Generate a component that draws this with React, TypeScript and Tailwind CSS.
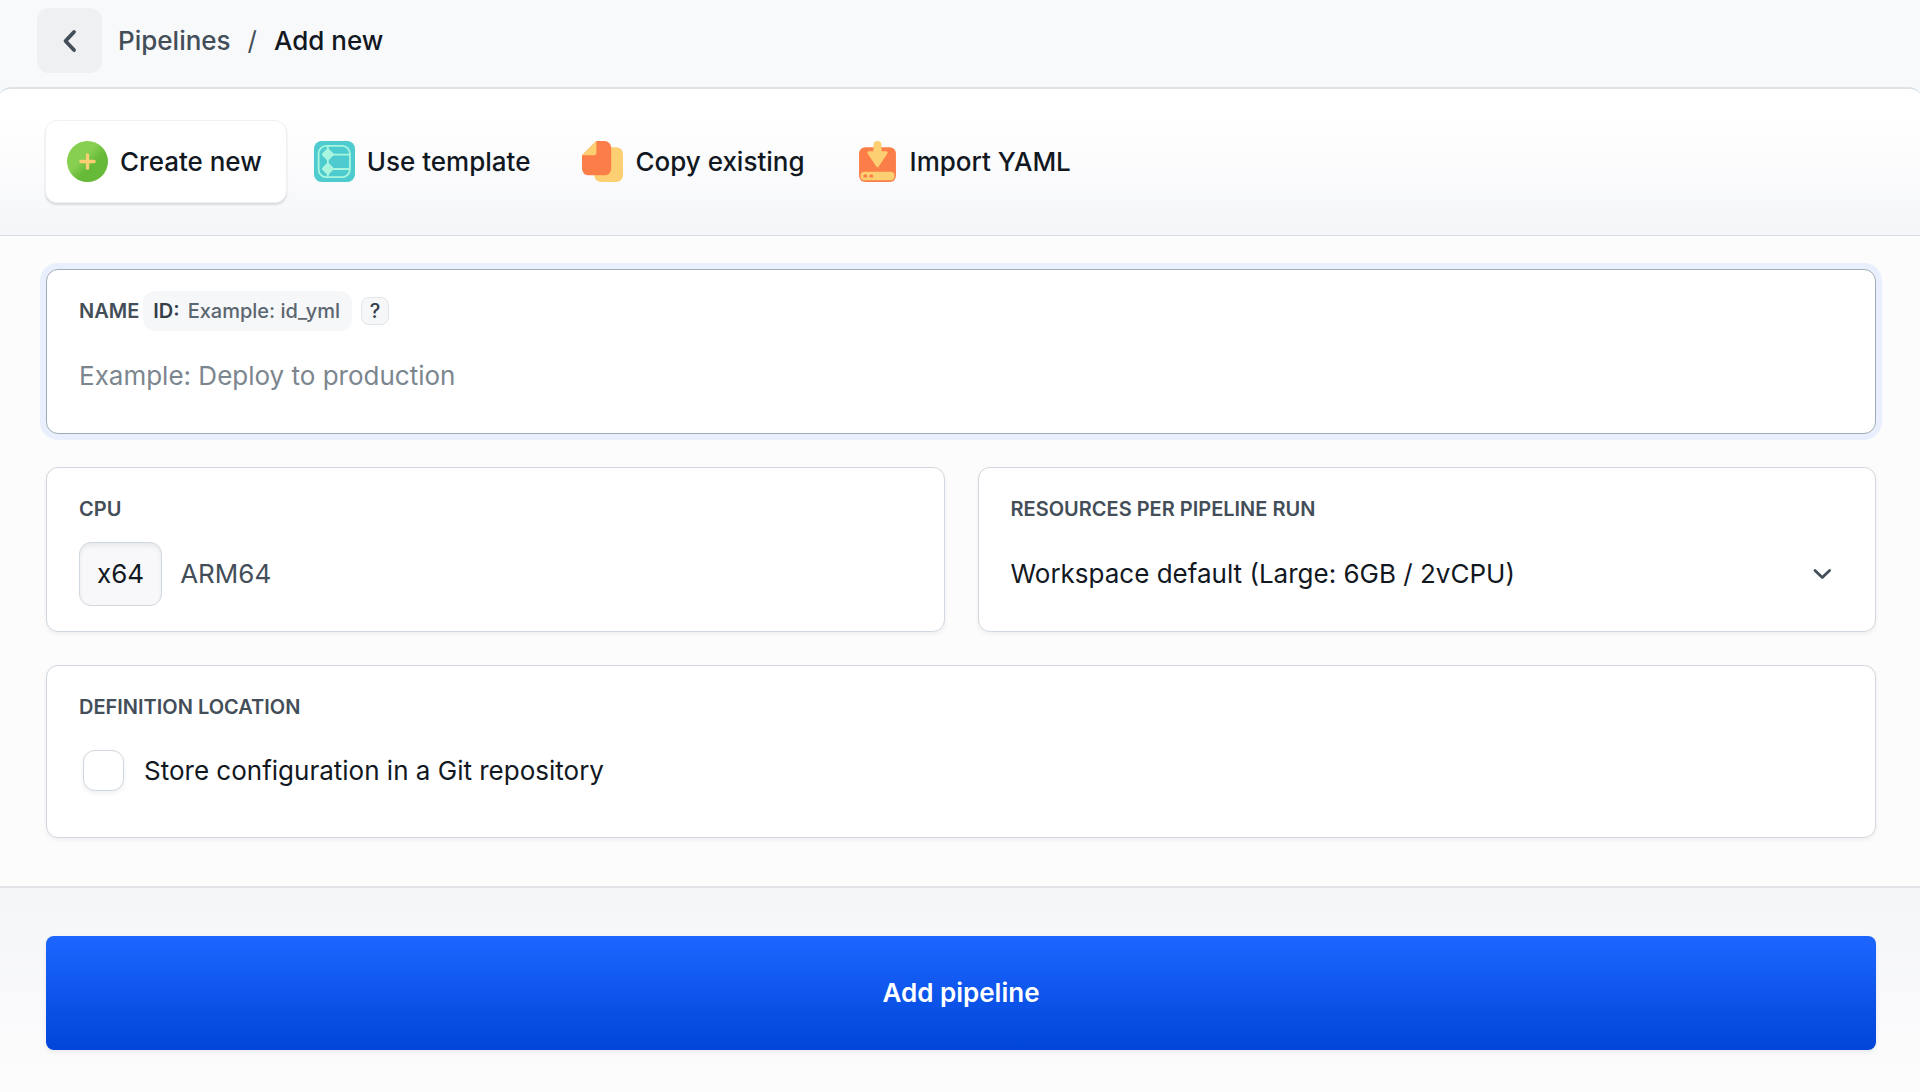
import { useState, type ReactNode } from 'react';

function CreateIcon() {
  return (
    <svg viewBox="0 0 40 40" className="size-[41px] shrink-0" aria-hidden="true">
      <defs>
        <linearGradient id="create-fill" x1="0" y1="0" x2="1" y2="1">
          <stop offset="0.4" stopColor="#86cf50" />
          <stop offset="0.6" stopColor="#67b938" />
        </linearGradient>
      </defs>
      <circle cx="20" cy="20" r="20" fill="url(#create-fill)" />
      <path d="M20 13.5v13M13.500 20h13" stroke="#fcd072" strokeWidth="3.2" strokeLinecap="round" />
    </svg>
  );
}

function TemplateIcon() {
  return (
    <svg viewBox="0 0 40 40" className="size-[41px] shrink-0" aria-hidden="true">
      <rect width="40" height="40" rx="7.5" fill="#4ecbcf" />
      <g fill="none" stroke="#a9f5df" strokeWidth="1.8">
        <rect x="4.5" y="4.8" width="30.5" height="30.5" rx="7.5" />
        <path d="M17 13.3h18M17 27.3h18M13.5 5v30" />
      </g>
      <g fill="#a9f5df" stroke="#a9f5df" strokeWidth="3" strokeLinejoin="round">
        <path d="M13.500 8.800 17.800 13.100 13.500 17.400 9.200 13.100z" />
        <path d="M13.500 22.800 17.800 27.100 13.500 31.400 9.200 27.100z" />
      </g>
    </svg>
  );
}

function CopyIcon() {
  return (
    <svg viewBox="0 0 40 40" className="size-[41px] shrink-0" aria-hidden="true">
      <rect x="12" y="6" width="28" height="34" rx="6.5" fill="#fcd072" />
      <path d="M14 0h8a6.5 6.5 0 0 1 6.500 6.500v20.500a6.500 6.500 0 0 1-6.500 6.500H6.500A6.500 6.500 0 0 1 0 27V14z" fill="#fb7e48" />
      <path d="M14 0v11.500a2.500 2.500 0 0 1-2.500 2.500H0z" fill="#fcd072" />
    </svg>
  );
}

function ImportIcon() {
  return (
    <svg viewBox="0 0 40 40" className="size-[41px] shrink-0" aria-hidden="true">
      <rect x="2" y="6" width="36" height="34" rx="6" fill="#fb7e48" />
      <path
        d="M20 0a4 4 0 0 1 4 4v6h4.500c1.200 0 1.800 1.400 1 2.400L21 25.200a1.300 1.300 0 0 1-2 0L10.500 12.400c-.8-1-.2-2.400 1-2.400H16V4a4 4 0 0 1 4-4z"
        fill="#fcd072"
      />
      <rect x="3.500" y="30" width="33" height="8.200" rx="3.800" fill="#fcd072" />
      <path d="M6.200 35.500v-1.200a1.900 1.900 0 0 1 3.800 0v1.200zM12 35.500v-1.200a1.900 1.900 0 0 1 3.800 0v1.200z" fill="#fb7e48" />
    </svg>
  );
}

const tabs = [
  { label: 'Create new', icon: <CreateIcon /> },
  { label: 'Use template', icon: <TemplateIcon /> },
  { label: 'Copy existing', icon: <CopyIcon /> },
  { label: 'Import YAML', icon: <ImportIcon /> },
];

const labelClass = 'text-[20px] leading-[30px] font-semibold uppercase text-[#434e59]';

function Card({ children, className = '' }: { children: ReactNode; className?: string }) {
  return (
    <section
      className={`rounded-xl border border-[#d0d7de] bg-white px-8 shadow-[0_2px_4px_rgba(30,40,60,0.06)] ${className}`}
    >
      {children}
    </section>
  );
}

export default function App() {
  const [tab, setTab] = useState('Create new');
  const [cpu, setCpu] = useState('x64');

  return (
    <div className="flex min-h-screen flex-col bg-[#f8f9fb] font-['Inter',sans-serif] text-[26px] leading-10 text-[#12181f]">
      <header className="flex items-center px-[37px] pt-2 pb-[14px]">
        <button
          type="button"
          aria-label="Back"
          className="flex size-[65px] items-center justify-center rounded-xl bg-[#eff0f2]"
        >
          <svg viewBox="0 0 24 24" className="size-6" fill="none" stroke="#434e59" strokeWidth="3.8" strokeLinecap="round" strokeLinejoin="round" aria-hidden="true">
            <path d="M16 3 7.500 12 16 21" />
          </svg>
        </button>
        <nav aria-label="Breadcrumb" className="flex pl-4 font-medium">
          <a href="#pipelines" className="text-[#434e59]">Pipelines</a>
          <span className="px-[17px] font-normal text-[#434e59]">/</span>
          <span aria-current="page">Add new</span>
        </nav>
      </header>

      <main className="-mx-1 flex flex-1 flex-col overflow-hidden rounded-t-2xl border-t-2 border-[#dde2e7] bg-[#fcfcfc]">
        <div role="tablist" className="flex gap-[5px] border-b border-[#d8dde3] bg-linear-to-b from-white from-20% to-[#f5f6f9] px-[49px] pt-[31px] pb-8">
          {tabs.map(({ label, icon }) => (
            <button
              key={label}
              type="button"
              role="tab"
              aria-selected={tab === label}
              onClick={() => setTab(label)}
              className={`flex h-[83px] items-center gap-3 rounded-xl border pr-6 pl-[21px] font-medium ${
                tab === label
                  ? 'border-[#eff0f2] bg-white shadow-[0_2px_2px_rgba(30,40,60,0.14)]'
                  : 'border-transparent'
              }`}
            >
              {icon}
              {label}
            </button>
          ))}
        </div>

        <form className="flex flex-1 flex-col" onSubmit={(e) => e.preventDefault()}>
          <div className="grid grid-cols-2 gap-[33px] pt-[33px] pr-12 pb-12 pl-[50px]">
            <section className="col-span-2 min-h-[165px] rounded-xl border border-[#a3acb6] bg-white px-8 pt-[21px] ring-6 ring-[#e9effd]">
              <div className="flex items-center">
                <label htmlFor="name" className={labelClass}>Name</label>
                <p className="ml-1 flex h-10 items-center gap-2 rounded-xl bg-[#f6f7f9] pr-3 pl-[10px] text-[20px]">
                  <span className="font-semibold text-[#343e48]">ID:</span>
                  <span className="font-medium text-[#5b666f]">Example: id_yml</span>
                </p>
                <button
                  type="button"
                  aria-label="About the ID"
                  className="ml-[9px] flex size-7 items-center justify-center rounded-lg border border-[#e2e5e9] bg-[#f6f7f9] text-[20px] font-medium text-[#343e48]"
                >
                  ?
                </button>
              </div>
              <input
                id="name"
                type="text"
                placeholder="Example: Deploy to production"
                className="mt-[25px] block w-full bg-transparent outline-none placeholder:text-[#7c868f]"
              />
            </section>

            <Card className="min-h-[165px] pt-[26px]">
              <fieldset>
                <legend className={labelClass}>CPU</legend>
                <div className="mt-[18px] flex">
                  {['x64', 'ARM64'].map((name) => (
                    <label
                      key={name}
                      className={`flex h-16 cursor-pointer items-center rounded-xl border px-[17px] ${
                        cpu === name
                          ? 'border-[#d0d7de] bg-[#f8f8fa] shadow-[inset_0_3px_4px_rgba(30,40,60,0.07)]'
                          : 'border-transparent text-[#434e59]'
                      }`}
                    >
                      <input
                        type="radio"
                        name="cpu"
                        value={name}
                        checked={cpu === name}
                        onChange={() => setCpu(name)}
                        className="sr-only"
                      />
                      {name}
                    </label>
                  ))}
                </div>
              </fieldset>
            </Card>

            <Card className="min-h-[165px] pt-[26px]">
              <label htmlFor="resources" className={`block ${labelClass}`}>Resources per pipeline run</label>
              <div className="mt-[30px] grid items-center">
                <select id="resources" className="col-start-1 row-start-1 h-10 w-full appearance-none bg-transparent outline-none">
                  <option>Workspace default (Large: 6GB / 2vCPU)</option>
                </select>
                <svg viewBox="0 0 24 24" className="pointer-events-none col-start-1 row-start-1 mr-2 size-6 justify-self-end" fill="none" stroke="#434e59" strokeWidth="2.8" strokeLinecap="round" strokeLinejoin="round" aria-hidden="true">
                  <path d="m4 8.500 7.300 7 7.300-7" />
                </svg>
              </div>
            </Card>

            <Card className="col-span-2 min-h-[173px] pt-[26px]">
              <h2 className={labelClass}>Definition location</h2>
              <div className="mt-7 flex items-center gap-[20px] pl-1">
                <input
                  id="git"
                  type="checkbox"
                  className="size-[41px] appearance-none rounded-xl border border-[#d0d7de] bg-white shadow-[0_2px_4px_rgba(30,40,60,0.08)] checked:bg-[#1a66ff]"
                />
                <label htmlFor="git">Store configuration in a Git repository</label>
              </div>
            </Card>
          </div>

          <div className="flex-1 border-t-2 border-[#e1e3e6] bg-linear-to-b from-[#f5f6f8] to-[#fcfcfd] pt-12 pr-12 pb-[42px] pl-[50px]">
            <button
              type="submit"
              className="h-[114px] w-full rounded-lg bg-linear-to-b from-[#1c66ff] to-[#0045d8] font-semibold text-white shadow-[0_2px_4px_rgba(30,40,60,0.08)]"
            >
              Add pipeline
            </button>
          </div>
        </form>
      </main>
    </div>
  );
}
